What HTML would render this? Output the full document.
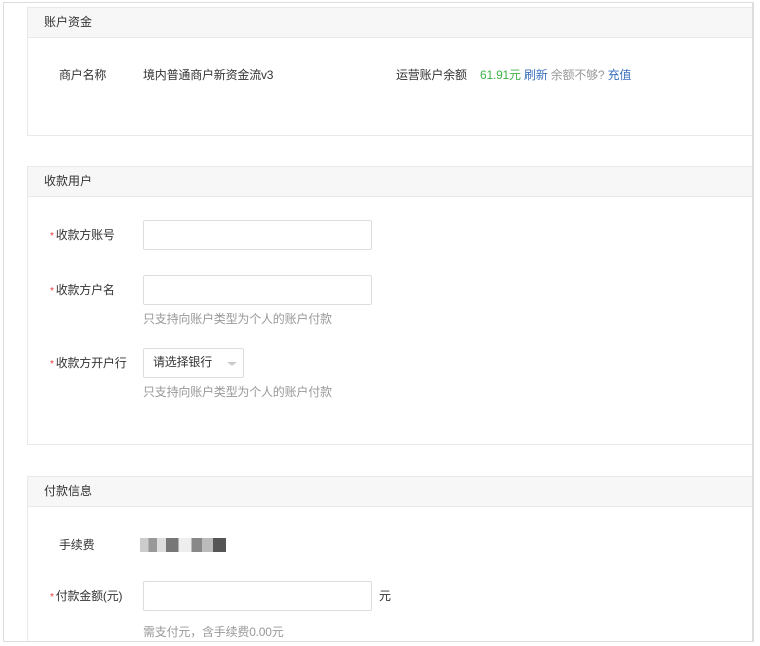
<!DOCTYPE html>
<html><head><meta charset="utf-8"><style>
*{box-sizing:border-box;margin:0;padding:0}
html,body{width:760px;height:646px;overflow:hidden}
body{background:#fff;font-family:"Liberation Sans","Noto Sans CJK SC",sans-serif;font-size:12px;color:#333;position:relative}
.frame{position:absolute;left:3px;top:2px;width:751px;height:640px;border:1px solid #ddd;border-right:2px solid #ddd;overflow:hidden}
.card{position:absolute;left:23px;width:727px;border:1px solid #e9e9e9;border-right:none}
.hd{height:30px;background:#f7f7f7;border-bottom:1px solid #e9e9e9;line-height:29px;padding-left:16px;color:#333}
.t{position:absolute;white-space:nowrap;line-height:16px;letter-spacing:-0.2px}
.in{position:absolute;border:1px solid #ddd;border-radius:2px;background:#fff}
.star{color:#e4393c;font-size:10px;margin-right:2px}
.g{color:#999}
</style></head><body>
<div class="frame">
<div class="card" style="top:4px;height:129px"><div class="hd">账户资金</div></div>
<div class="card" style="top:163px;height:279px"><div class="hd">收款用户</div></div>
<div class="card" style="top:473px;height:200px"><div class="hd">付款信息</div></div>
</div>

<div class="t" style="left:59px;top:67px">商户名称</div>
<div class="t" style="left:143px;top:67px">境内普通商户新资金流v3</div>
<div class="t" style="left:396px;top:67px">运营账户余额</div>
<div class="t" style="left:480px;top:67px"><span style="color:#3cb34a">61.91元</span> <span style="color:#3a6fbf">刷新</span> <span class="g">余额不够?</span> <span style="color:#3a6fbf">充值</span></div>

<div class="t" style="left:50px;top:227px"><span class="star">*</span>收款方账号</div>
<div class="in" style="left:143px;top:220px;width:229px;height:30px"></div>
<div class="t" style="left:50px;top:282px"><span class="star">*</span>收款方户名</div>
<div class="in" style="left:143px;top:275px;width:229px;height:30px"></div>
<div class="t g" style="left:143px;top:311px">只支持向账户类型为个人的账户付款</div>
<div class="t" style="left:50px;top:355px"><span class="star">*</span>收款方开户行</div>
<div class="in" style="left:143px;top:348px;width:101px;height:30px"></div>
<div class="t" style="left:153px;top:354px">请选择银行</div>
<div style="position:absolute;left:227px;top:362px;width:0;height:0;border-left:5px solid transparent;border-right:5px solid transparent;border-top:4px solid #ccc"></div>
<div class="t g" style="left:143px;top:384px">只支持向账户类型为个人的账户付款</div>

<div class="t" style="left:59px;top:537px">手续费</div>
<div style="position:absolute;left:140px;top:538px;width:86px;height:14px;background:linear-gradient(90deg,#ccc 0 10%,#999 10% 20%,#ddd 20% 30%,#777 30% 45%,#eee 45% 60%,#888 60% 72%,#bbb 72% 85%,#555 85%)"></div>
<div class="t" style="left:50px;top:588px"><span class="star">*</span>付款金额(元)</div>
<div class="in" style="left:143px;top:581px;width:229px;height:30px"></div>
<div class="t" style="left:379px;top:588px">元</div>
<div class="t g" style="left:143px;top:624px">需支付元，含手续费0.00元</div>
</body></html>
